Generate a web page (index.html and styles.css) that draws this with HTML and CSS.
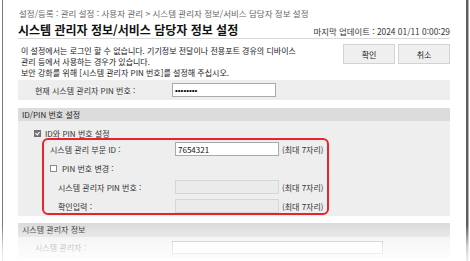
FILE: index.html
```html
<!DOCTYPE html>
<html lang="ko">
<head>
    <meta charset="UTF-8">
    <meta name="viewport" content="width=device-width, initial-scale=1.0">
    <title>시스템 관리자 정보/서비스 담당자 정보 설정</title>
    <link rel="stylesheet" href="styles.css">
</head>
<body>
    <div class="screen">
        <div class="window">
            <div class="crumb">설정/등록 : 관리 설정 : 사용자 관리 &gt; 시스템 관리자 정보/서비스 담당자 정보 설정</div>

            <div class="titlebar">
                <h1>시스템 관리자 정보/서비스 담당자 정보 설정</h1>
                <span class="updated">마지막 업데이트 : 2024 01/11 0:00:29</span>
            </div>

            <div class="intro">
                <p class="desc">이 설정에서는 로그인 할 수 없습니다. 기기정보 전달이나 전용포트 경유의 디바이스<br>관리 등에서 사용하는 경우가 있습니다.<br>보안 강화를 위해 [시스템 관리자 PIN 번호]를 설정해 주십시오.</p>
                <div class="actions">
                    <button class="btn">확인</button>
                    <button class="btn">취소</button>
                </div>
            </div>

            <div class="panel">
                <label class="label">현재 시스템 관리자 PIN 번호 :</label>
                <input class="field masked" type="text" value="••••••••">
            </div>

            <div class="section">
                <div class="section-head">ID/PIN 번호 설정</div>
                <div class="section-body">
                    <div class="check-row top"><span class="check on"></span>ID와 PIN 번호 설정</div>
                    <div class="highlight">
                        <label class="label">시스템 관리 부문 ID :</label>
                        <input class="field" type="text" value="7654321">
                        <span class="note">(최대 7자리)</span>

                        <div class="check-row full"><span class="check"></span>PIN 번호 변경 :</div>

                        <label class="label sub">시스템 관리자 PIN 번호 :</label>
                        <input class="field" type="password" disabled>
                        <span class="note">(최대 7자리)</span>

                        <label class="label sub">확인입력 :</label>
                        <input class="field" type="password" disabled>
                        <span class="note">(최대 7자리)</span>
                    </div>
                </div>
            </div>

            <div class="section second">
                <div class="section-head">시스템 관리자 정보</div>
                <div class="section-body plain">
                    <label class="label">시스템 관리자 :</label>
                    <input class="field wide" type="text">
                </div>
            </div>
        </div>
        <div class="fade"></div>
    </div>
</body>
</html>
```

FILE: styles.css
```css
* {
    box-sizing: border-box;
}

html,
body {
    margin: 0;
}

body {
    font-family: "Noto Sans CJK KR", sans-serif;
    font-size: 8px;
    color: #333;
    background: #fff;
}

.screen {
    position: relative;
    width: 470px;
    height: 261px;
    overflow: hidden;
}

.window {
    margin-left: 2px;
    width: 466px;
    height: 261px;
    border-left: 1px solid #7a7a7a;
    border-right: 2px solid #5e5e5e;
    box-shadow: 1px 0 0 #b0b0b0;
    padding: 7px 16px 0 15px;
}

.crumb {
    font-size: 8.5px;
    line-height: 12px;
    color: #666;
    padding-left: 1px;
    margin-bottom: 3px;
    white-space: nowrap;
}

.titlebar {
    display: flex;
    justify-content: space-between;
    align-items: flex-end;
    height: 17px;
    border-bottom: 1px solid #d9d9d9;
}

h1 {
    margin: 0;
    font-size: 12px;
    font-weight: bold;
    line-height: 16px;
    color: #111;
}

.updated {
    font-size: 8.4px;
    line-height: 12px;
    margin-bottom: 1px;
    color: #333;
}

.intro {
    display: flex;
    justify-content: space-between;
    align-items: flex-start;
    height: 41px;
    padding-top: 5px;
}

.desc {
    margin: 1px 0 0;
    padding-left: 3px;
    line-height: 11px;
    color: #222;
}

.actions {
    display: flex;
    gap: 3px;
}

.btn {
    width: 52px;
    height: 20px;
    padding: 0;
    border: 1px solid #d3d3d3;
    background: #efefef;
    font: inherit;
    color: #222;
}

.panel {
    display: flex;
    align-items: center;
    background: #eee;
    padding: 3px 0 3px 17px;
}

.panel .label {
    width: 137px;
}

.label {
    color: #333;
    white-space: nowrap;
}

.field {
    width: 104px;
    height: 14px;
    margin: 0;
    padding: 0 2px;
    border: 1px solid #a9a9a9;
    background: #fff;
    font: inherit;
    color: #111;
}

.field.masked {
    font-family: "Liberation Sans", sans-serif;
    font-size: 8px;
    color: #000;
}

.field:disabled {
    background: #ebebeb;
    border-color: #d6d6d6;
}

.section {
    margin-top: 8px;
}

.section.second {
    margin-top: 7px;
}

.section-head {
    height: 13px;
    line-height: 13px;
    padding-left: 4px;
    background: #dcdcdc;
    color: #222;
}

.second .section-head {
    height: 14px;
    line-height: 14px;
}

.section-body {
    background: #eee;
    padding: 7px 0 1px 16px;
}

.check-row {
    display: flex;
    align-items: center;
    gap: 5px;
    color: #333;
}

.check-row.top {
    height: 10px;
    gap: 4px;
}

.check {
    width: 7px;
    height: 7px;
    border: 1px solid #8a8a8a;
    background: #fff;
    flex: none;
}

.check.on {
    position: relative;
    border-color: #6f6f6f;
    background: #777;
}

.check.on::after {
    content: "";
    position: absolute;
    left: 1px;
    top: 0;
    width: 2px;
    height: 3px;
    border: solid #fff;
    border-width: 0 1px 1px 0;
    transform: rotate(40deg);
}

.highlight {
    display: grid;
    grid-template-columns: 122px 104px auto;
    grid-auto-rows: 14px;
    column-gap: 3px;
    row-gap: 5px;
    align-items: center;
    width: 287px;
    margin-left: 8px;
    padding: 2px 0 0 6px;
    border: 2px solid #e8232c;
    border-radius: 6px;
}

.highlight .full {
    grid-column: 1 / 4;
}

.label.sub {
    padding-left: 8px;
}

.note {
    color: #333;
    white-space: nowrap;
}

.section-body.plain {
    display: flex;
    align-items: center;
    padding: 4px 0 4px 17px;
}

.plain .label {
    width: 137px;
}

.field.wide {
    width: 211px;
    height: 13px;
}

.fade {
    position: absolute;
    left: 0;
    right: 0;
    bottom: 0;
    height: 36px;
    background: linear-gradient(to bottom, rgba(255, 255, 255, 0) 0, rgba(255, 255, 255, 0.7) 60%, rgba(255, 255, 255, 0.9) 100%);
    pointer-events: none;
}
```
